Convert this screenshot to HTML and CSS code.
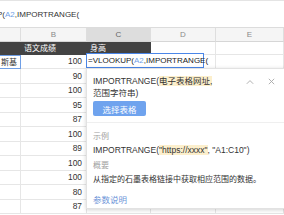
FILE: index.html
```html
<!DOCTYPE html>
<html>
<head>
<meta charset="utf-8">
<link rel="stylesheet" href="styles.css">
</head>
<body>
<div class="sheet">
  <div class="fbar"><span class="ftext">=VLOOKUP(<span class="ref">A2</span>,IMPORTRANGE(</span></div>
  <div class="grid">
    <div class="ch"></div><div class="ch">B</div><div class="ch sel">C</div><div class="ch">D</div><div class="ch">E</div>

    <div class="c dark"></div><div class="c dark">语文成绩</div><div class="c dark">身高</div><div class="c"></div><div class="c"></div>

    <div class="c refcell"><span>斯基</span></div><div class="c num">100</div><div class="c"></div><div class="c"></div><div class="c"></div>
    <div class="c"></div><div class="c num">90</div><div class="c"></div><div class="c"></div><div class="c"></div>
    <div class="c"></div><div class="c num">100</div><div class="c"></div><div class="c"></div><div class="c"></div>
    <div class="c"></div><div class="c num">95</div><div class="c"></div><div class="c"></div><div class="c"></div>
    <div class="c"></div><div class="c num">87</div><div class="c"></div><div class="c"></div><div class="c"></div>
    <div class="c"></div><div class="c num">100</div><div class="c"></div><div class="c"></div><div class="c"></div>
    <div class="c"></div><div class="c num">89</div><div class="c"></div><div class="c"></div><div class="c"></div>
    <div class="c"></div><div class="c num">100</div><div class="c"></div><div class="c"></div><div class="c"></div>
    <div class="c"></div><div class="c num">100</div><div class="c"></div><div class="c"></div><div class="c"></div>
    <div class="c"></div><div class="c num">80</div><div class="c"></div><div class="c"></div><div class="c"></div>
    <div class="c"></div><div class="c num">87</div><div class="c"></div><div class="c"></div><div class="c"></div>
  </div>

  <div class="edit">=VLOOKUP(<span class="ref">A2</span>,IMPORTRANGE(<span class="caret"></span></div>

  <div class="popup">
    <div class="ptop">
      <div class="sig">IMPORTRANGE(<span class="hl">电子表格网址,</span> 范围字符串)</div>
      <div class="ctrls">
        <svg class="ic" width="8" height="6" viewBox="0 0 8 6"><path d="M0.8 4.8 L4 1.6 L7.2 4.8" fill="none" stroke="#a8a8a8" stroke-width="0.9"/></svg>
        <svg class="ic" width="7" height="7" viewBox="0 0 7 7"><path d="M0.8 0.8 L6.2 6.2 M6.2 0.8 L0.8 6.2" fill="none" stroke="#a8a8a8" stroke-width="0.9"/></svg>
      </div>
    </div>
    <div class="btn">选择表格</div>
    <div class="details">
      <div class="label">示例</div>
      <div class="line ex">IMPORTRANGE(<span class="hl">"https://xxxx"</span>, "A1:C10")</div>
      <div class="label l2">概要</div>
      <div class="line sum">从指定的石墨表格链接中获取相应范围的数据。</div>
      <div class="link">参数说明</div>
    </div>
  </div>
</div>
</body>
</html>
```

FILE: styles.css
```css
html, body {
  margin: 0;
  padding: 0;
  background: #ffffff;
}
body {
  font-family: "Liberation Sans", Arial, "Noto Sans CJK SC", sans-serif;
  color: #333333;
  overflow: hidden;
}
.sheet {
  position: relative;
  width: 284px;
  height: 215px;
  overflow: hidden;
}
.fbar {
  height: 25px;
  border-top: 1px solid #e4e4e4;
  border-bottom: 1px solid #dcdcdc;
  display: flex;
  align-items: center;
  font-size: 8px;
  white-space: nowrap;
  padding-top: 1px;
}
.ftext {
  margin-left: -41px;
  color: #333333;
}
.ref {
  color: #6f9fe6;
}
.grid {
  display: grid;
  grid-template-columns: 21px 66px 64px 65px 68px;
  grid-template-rows: 14px 12.5px repeat(11, 14.5px);
}
.ch {
  background: #f5f5f5;
  border-right: 1px solid #dedede;
  border-bottom: 1px solid #d6d6d6;
  font-size: 8px;
  color: #8a8a8a;
  display: flex;
  align-items: center;
  justify-content: center;
}
.ch.sel {
  background: #dddddd;
  color: #666666;
}
.c {
  border-right: 1px solid #e6e6e6;
  border-bottom: 1px solid #e6e6e6;
  font-size: 8px;
  display: flex;
  align-items: center;
  overflow: hidden;
  white-space: nowrap;
}
.grid > div {
  box-sizing: border-box;
}
.dark {
  background: #434343;
  color: #ffffff;
  padding-left: 3px;
  border-right-color: #434343;
  border-bottom-color: #434343;
  font-family: "Noto Sans CJK SC", sans-serif;
  font-size: 8px;
}
.num {
  justify-content: flex-end;
  padding-right: 4px;
  font-size: 8.4px;
}
.refcell {
  border: 1px solid #6f9fe6;
  border-left: none;
  justify-content: flex-end;
  padding-right: 3px;
  font-family: "Noto Sans CJK SC", sans-serif;
  font-size: 8px;
}
.edit {
  position: absolute;
  left: 86px;
  top: 53px;
  width: 118px;
  height: 15px;
  box-sizing: border-box;
  border: 1.5px solid #4a86e8;
  background: #ffffff;
  font-size: 8px;
  display: flex;
  align-items: center;
  padding-left: 1px;
  white-space: nowrap;
  color: #222222;
}
.caret {
  display: inline-block;
  width: 1px;
  height: 9px;
  background: #222222;
  margin-left: 1px;
}
.popup {
  position: absolute;
  left: 86px;
  top: 68px;
  width: 204px;
  height: 141px;
  box-sizing: border-box;
  background: #ffffff;
  border: 1px solid #e2e2e2;
  box-shadow: 0 1px 4px rgba(0, 0, 0, 0.18);
  padding: 6px 0 0 6px;
  font-size: 8.5px;
  color: #333333;
}
.ptop {
  display: flex;
  align-items: flex-start;
  justify-content: space-between;
}
.sig {
  width: 124px;
  line-height: 12px;
}
.hl {
  background: #fcefcc;
}
.ctrls {
  display: flex;
  gap: 14px;
  align-items: center;
  padding-top: 3px;
  padding-right: 14px;
}
.ic {
  display: block;
}
.btn {
  margin-top: 2px;
  width: 53px;
  height: 15px;
  background: #6fa3ee;
  color: #ffffff;
  border-radius: 2px;
  display: flex;
  align-items: center;
  justify-content: center;
  font-size: 8.5px;
}
.details {
  margin-top: 6px;
  margin-left: -6px;
  padding: 8px 0 0 6px;
  border-top: 1px solid #efefef;
  line-height: 12px;
}
.label {
  color: #a0a0a0;
  font-size: 8px;
}
.line {
  margin-top: 1px;
}
.l2 {
  margin-top: 4px;
}
.sum {
  margin-top: 2px;
  font-size: 8px;
}
.link {
  margin-top: 8px;
  color: #6d94d8;
  font-size: 8.5px;
}
```
